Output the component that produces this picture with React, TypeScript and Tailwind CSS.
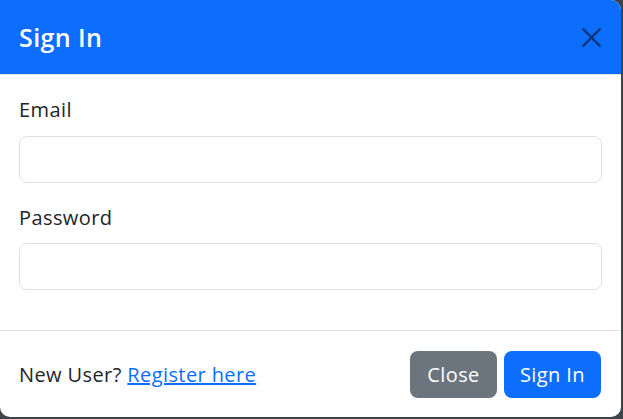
import React from "react";

const SignInModal: React.FC = () => {
  return (
    <div className="w-[623px] h-[419px] bg-[#3d4449] overflow-hidden">
      <div
        className="w-[621px] h-[417px] bg-white rounded-tr-[10px] rounded-b-[10px] overflow-hidden flex flex-col text-[#212529] tracking-[0.4px]"
        style={{ fontFamily: '"Open Sans", "Liberation Sans", sans-serif' }}
      >
        {/* header */}
        <div className="h-[75px] shrink-0 bg-[#0d6efd] border-b border-[#dee2e6] pl-[19px] pr-[20px] flex items-center justify-between">
          <h5 className="text-[25px] font-semibold text-white leading-none">Sign In</h5>
          <button className="w-[20px] h-[20px] flex items-center justify-center">
            <svg width="19" height="19" viewBox="0 0 16 16" fill="#000" fillOpacity="0.5">
              <path d="M.293.293a1 1 0 0 1 1.414 0L8 6.586 14.293.293a1 1 0 1 1 1.414 1.414L9.414 8l6.293 6.293a1 1 0 0 1-1.414 1.414L8 9.414l-6.293 6.293a1 1 0 0 1-1.414-1.414L6.586 8 .293 1.707a1 1 0 0 1 0-1.414z" />
            </svg>
          </button>
        </div>

        {/* body */}
        <div className="px-[19px] pt-[20px] flex-1">
          <label className="block text-[20px] leading-[30px] mb-[11px]">Email</label>
          <input
            type="email"
            className="block w-full h-[47px] rounded-[8px] border border-[#dee2e6] px-3 outline-none"
          />
          <label className="block text-[20px] leading-[30px] mt-[20px] mb-[10px]">Password</label>
          <input
            type="password"
            className="block w-full h-[47px] rounded-[8px] border border-[#dee2e6] px-3 outline-none"
          />
        </div>

        {/* footer */}
        <div className="h-[87px] shrink-0 border-t border-[#dee2e6] pr-[20px] pl-[19px] pt-[20px] flex items-start justify-between">
          <p className="text-[20px] leading-[47px]">
            New User?{" "}
            <a href="#" className="text-[#0d6efd] underline">
              Register here
            </a>
          </p>
          <div className="flex gap-[7px]">
            <button className="w-[87px] h-[47px] rounded-[8px] bg-[#6c757d] text-white text-[20px]">
              Close
            </button>
            <button className="w-[97px] h-[47px] rounded-[8px] bg-[#0d6efd] text-white text-[20px]">
              Sign In
            </button>
          </div>
        </div>
      </div>
    </div>
  );
};

export default function App() {
  return <SignInModal />;
}
